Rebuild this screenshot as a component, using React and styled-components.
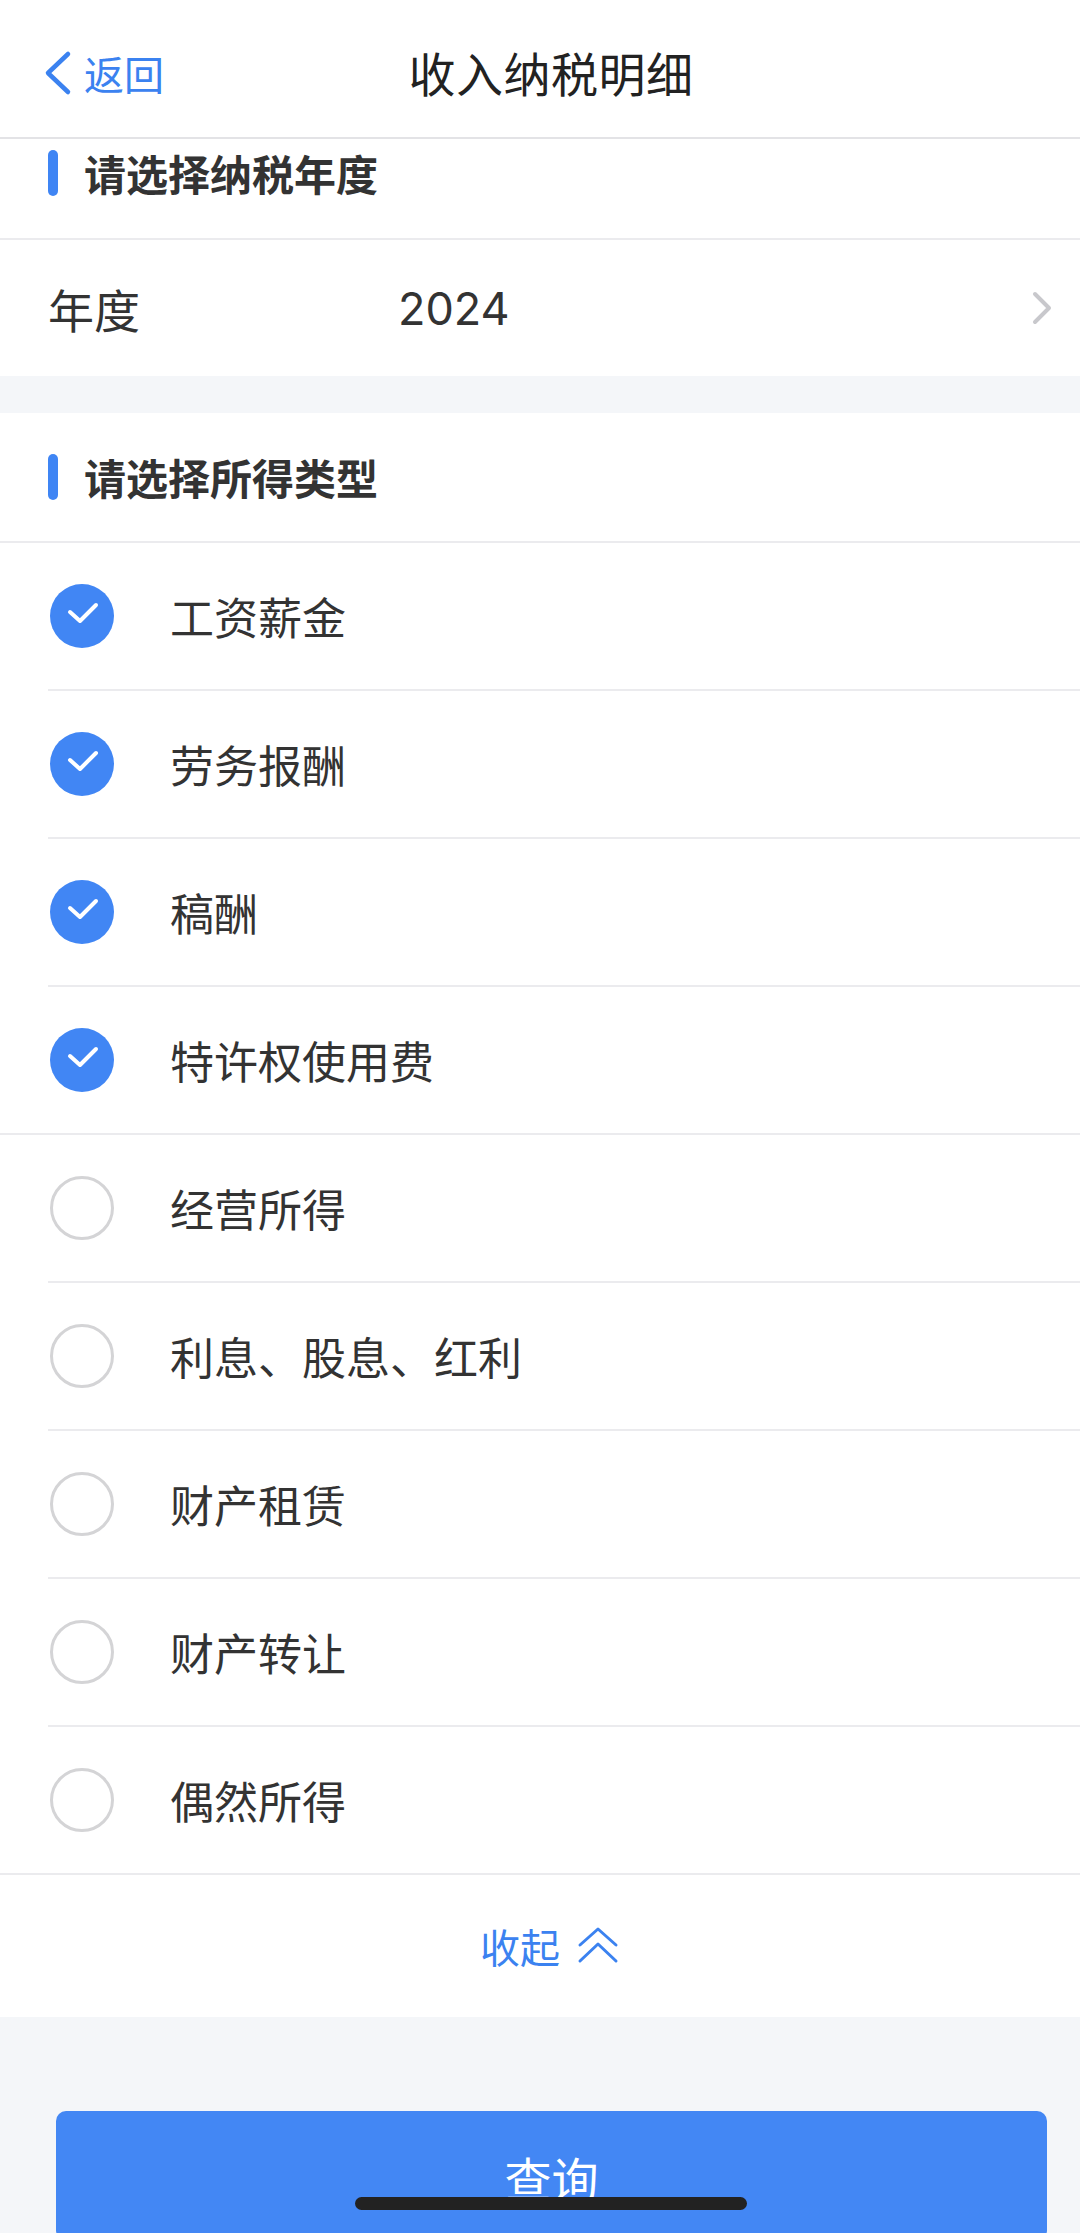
import React, { useState } from "react"
import styled, { createGlobalStyle } from "styled-components"

const GlobalStyle = createGlobalStyle`
    html, body {
        margin: 0;
        padding: 0;
        background: #f4f6f9;
    }
    body {
        font-family: "Noto Sans CJK SC", "Noto Sans", sans-serif;
        color: #333;
        -webkit-font-smoothing: antialiased;
    }
`

const incomeTypes = [
    { label: "工资薪金", checked: true },
    { label: "劳务报酬", checked: true },
    { label: "稿酬", checked: true },
    { label: "特许权使用费", checked: true, last: true },
    { label: "经营所得", checked: false },
    { label: "利息、股息、红利", checked: false },
    { label: "财产租赁", checked: false },
    { label: "财产转让", checked: false },
    { label: "偶然所得", checked: false, last: true },
]

const BackIcon = () => (
    <svg width="30" height="50" viewBox="0 0 30 50">
        <polyline points="24,6 4,25 24,44" fill="none" stroke="#3b82f0" strokeWidth="4.5" strokeLinecap="round" strokeLinejoin="round" />
    </svg>
)

const ArrowRight = () => (
    <svg width="24" height="36" viewBox="0 0 24 36">
        <polyline points="5,4 19,18 5,32" fill="none" stroke="#c8c8cc" strokeWidth="4" strokeLinecap="round" strokeLinejoin="round" />
    </svg>
)

const CheckMark = () => (
    <svg width="64" height="64" viewBox="0 0 64 64">
        <polyline points="20,28 30,37 46,21" fill="none" stroke="#fff" strokeWidth="4" strokeLinecap="round" strokeLinejoin="round" />
    </svg>
)

const DoubleUp = () => (
    <svg width="44" height="40" viewBox="0 0 44 40">
        <polyline points="4,20 22,4 40,20" fill="none" stroke="#3b82f0" strokeWidth="3" strokeLinecap="round" strokeLinejoin="round" />
        <polyline points="4,36 22,19 40,36" fill="none" stroke="#3b82f0" strokeWidth="3" strokeLinecap="round" strokeLinejoin="round" />
    </svg>
)

export default function App() {
    const [items, setItems] = useState(incomeTypes)

    const toggle = (i) => {
        setItems(items.map((it, idx) => idx === i ? { ...it, checked: !it.checked } : it))
    }

    return (
        <Page>
            <GlobalStyle />
            <NavBar>
                <BackButton>
                    <BackIcon />
                    <span>返回</span>
                </BackButton>
                <NavTitle>收入纳税明细</NavTitle>
            </NavBar>

            <Card>
                <SectionHeader clipped>
                    <Bar />
                    <h2>请选择纳税年度</h2>
                </SectionHeader>
                <YearRow>
                    <label>年度</label>
                    <YearValue>2024</YearValue>
                    <ArrowRight />
                </YearRow>
            </Card>

            <Card spaced>
                <SectionHeader>
                    <Bar />
                    <h2>请选择所得类型</h2>
                </SectionHeader>
                {items.map((it, i) => (
                    <OptionRow key={it.label} full={it.last} onClick={() => toggle(i)}>
                        <Circle checked={it.checked}>{it.checked && <CheckMark />}</Circle>
                        <OptionLabel>{it.label}</OptionLabel>
                    </OptionRow>
                ))}
                <Collapse>
                    <span>收起</span>
                    <DoubleUp />
                </Collapse>
            </Card>

            <Footer>
                <QueryButton>查询</QueryButton>
            </Footer>

            <HomeIndicator />
        </Page>
    )
}

const Page = styled.div`
    width: 1080px;
    min-height: 2233px;
    background: #f4f6f9;
    overflow: hidden;
`

const NavBar = styled.header`
    height: 137px;
    background: #fff;
    border-bottom: 2px solid #e3e3e6;
    display: flex;
    align-items: center;
    justify-content: center;
    position: relative;
`

const BackButton = styled.div`
    position: absolute;
    left: 44px;
    top: 48px;
    display: flex;
    align-items: center;
    gap: 10px;
    color: #3b82f0;
    font-size: 40px;
    span {
        line-height: 1;
    }
`

const NavTitle = styled.h1`
    margin: 6px 0 0 22px;
    font-size: 47px;
    font-weight: 400;
    color: #222;
    letter-spacing: 0.5px;
`

const Card = styled.section`
    background: #fff;
    margin-top: ${props => props.spaced ? "37px" : "0"};
`

const SectionHeader = styled.div`
    display: flex;
    align-items: ${props => props.clipped ? "flex-start" : "center"};
    height: ${props => props.clipped ? "88px" : "128px"};
    padding: ${props => props.clipped ? "11px 48px 0" : "0 48px"};
    border-bottom: 2px solid #ebebee;
    h2 {
        margin: 0 0 0 26px;
        font-size: 42px;
        font-weight: 700;
        color: #333;
        line-height: 46px;
    }
`

const Bar = styled.div`
    width: 10px;
    height: 46px;
    border-radius: 5px;
    background: #3f85f4;
    flex-shrink: 0;
`

const YearRow = styled.div`
    height: 136px;
    display: flex;
    align-items: center;
    padding: 0 26px 0 48px;
    font-size: 46px;
    color: #333;
    label {
        width: 350px;
    }
    svg {
        margin-left: auto;
    }
`

const YearValue = styled.span`
    font-family: Inter, "Noto Sans", sans-serif;
    font-size: 45px;
    color: #333;
`

const OptionRow = styled.div`
    height: 146px;
    display: flex;
    align-items: center;
    padding-left: 50px;
    position: relative;
    cursor: pointer;
    border-bottom: 2px solid ${props => props.full ? "#ebebee" : "transparent"};
    &::after {
        content: "";
        display: ${props => props.full ? "none" : "block"};
        position: absolute;
        left: 48px;
        right: 0;
        bottom: -2px;
        height: 2px;
        background: #ebebee;
    }
`

const Circle = styled.div`
    width: 64px;
    height: 64px;
    border-radius: 50%;
    box-sizing: border-box;
    background: ${props => props.checked ? "#4186f4" : "#fff"};
    border: ${props => props.checked ? "none" : "3px solid #d4d4d6"};
    display: flex;
    align-items: center;
    justify-content: center;
    flex-shrink: 0;
`

const OptionLabel = styled.span`
    margin-left: 56px;
    font-size: 44px;
    color: #333;
`

const Collapse = styled.div`
    height: 142px;
    display: flex;
    align-items: center;
    justify-content: center;
    gap: 16px;
    color: #3b82f0;
    font-size: 40px;
    span {
        margin-left: 20px;
    }
    svg {
        margin-top: -2px;
    }
`

const Footer = styled.div`
    padding: 94px 33px 0 56px;
`

const QueryButton = styled.button`
    width: 100%;
    height: 130px;
    border: none;
    border-radius: 10px;
    background: #4387f4;
    color: #fff;
    font-family: "Noto Sans CJK SC", sans-serif;
    font-size: 47px;
    display: flex;
    align-items: center;
    justify-content: center;
`

const HomeIndicator = styled.div`
    position: fixed;
    left: 355px;
    top: 2197px;
    width: 392px;
    height: 13px;
    border-radius: 7px;
    background: #222;
`
